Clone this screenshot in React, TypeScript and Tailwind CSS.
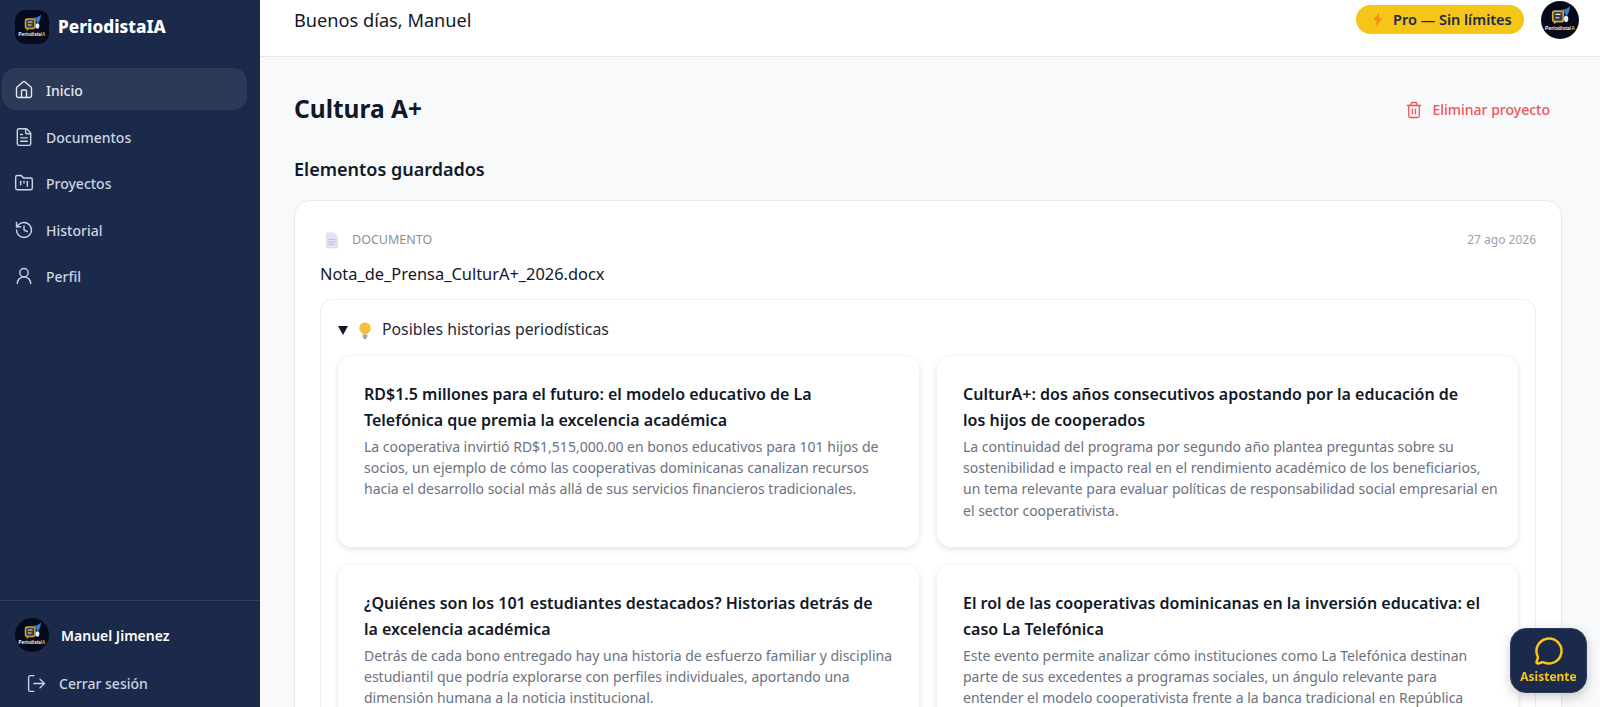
import { FileText, FolderKanban, History, House, LogOut, MessageCircle, Trash2, UserRound } from 'lucide-react';

const navItems = [
  { label: 'Inicio', icon: House, active: true },
  { label: 'Documentos', icon: FileText, active: false },
  { label: 'Proyectos', icon: FolderKanban, active: false },
  { label: 'Historial', icon: History, active: false },
  { label: 'Perfil', icon: UserRound, active: false },
];

// line breaks are kept as in the screenshot
const stories = [
  {
    title: 'RD$1.5 millones para el futuro: el modelo educativo de La\nTelefónica que premia la excelencia académica',
    body: 'La cooperativa invirtió RD$1,515,000.00 en bonos educativos para 101 hijos de\nsocios, un ejemplo de cómo las cooperativas dominicanas canalizan recursos\nhacia el desarrollo social más allá de sus servicios financieros tradicionales.',
  },
  {
    title: 'CulturA+: dos años consecutivos apostando por la educación de\nlos hijos de cooperados',
    body: 'La continuidad del programa por segundo año plantea preguntas sobre su\nsostenibilidad e impacto real en el rendimiento académico de los beneficiarios,\nun tema relevante para evaluar políticas de responsabilidad social empresarial en\nel sector cooperativista.',
  },
  {
    title: '¿Quiénes son los 101 estudiantes destacados? Historias detrás de\nla excelencia académica',
    body: 'Detrás de cada bono entregado hay una historia de esfuerzo familiar y disciplina\nestudiantil que podría explorarse con perfiles individuales, aportando una\ndimensión humana a la noticia institucional.',
  },
  {
    title: 'El rol de las cooperativas dominicanas en la inversión educativa: el\ncaso La Telefónica',
    body: 'Este evento permite analizar cómo instituciones como La Telefónica destinan\nparte de sus excedentes a programas sociales, un ángulo relevante para\nentender el modelo cooperativista frente a la banca tradicional en República',
  },
];

function Logo({ className }: { className: string }): React.ReactElement {
  return (
    <div className={`shrink-0 overflow-hidden bg-[#050b1c] ${className}`}>
      <svg viewBox="0 0 34 34" className="h-full w-full" aria-hidden="true">
        <path d="M18 7.500c3.500.5 6-.5 8-3-.2 3.500-1.500 7.500-3.500 9.500-.5-3-2-5.500-4.500-6.500z" fill="#2f80d8" />
        <rect x="10.500" y="9" width="9.500" height="9.500" rx="2" fill="#33404f" stroke="#d9a92c" strokeWidth="1.500" />
        <path d="M13 12h4.500M13 15h3.500" stroke="#f0e6c0" strokeWidth="1" />
        <path d="M12 18.500l-.5 2.500 3-2.500z" fill="#d9a92c" />
        <ellipse cx="22.500" cy="16" rx="1.900" ry="2.800" fill="#e8edf5" />
        <text x="17" y="25.500" textAnchor="middle" fontSize="4.600" fontWeight="700" fill="#f1f5f9" fontFamily="'Liberation Sans', sans-serif">
          Periodista<tspan fill="#e0b23a">IA</tspan>
        </text>
      </svg>
    </div>
  );
}

function Sidebar(): React.ReactElement {
  return (
    <aside className="flex h-full w-[260px] shrink-0 flex-col bg-[#1b2a4a]">
      <div className="flex h-[54px] items-center gap-[9px] pl-[15px]">
        <Logo className="h-[34px] w-[34px] rounded-[10px]" />
        <span className="text-[17.200px] font-extrabold text-white">PeriodistaIA</span>
      </div>

      <nav className="mt-[14px] flex flex-col gap-[5px] pl-[2px] pr-[13px]">
        {navItems.map((item) => (
          <a
            key={item.label}
            href="#"
            className={`flex h-[41.500px] items-center gap-[12.500px] rounded-[14px] pl-[11.500px] pt-[3px] text-[14px] font-medium ${
              item.active ? 'bg-white/8 text-[#e2e8f0]' : 'text-[#cbd5e1]'
            }`}
          >
            <item.icon className="h-[20px] w-[20px]" strokeWidth={1.700} />
            <span className="relative top-[0.500px]">{item.label}</span>
          </a>
        ))}
      </nav>

      <div className="mt-auto border-t border-white/10 pb-[11px] pl-[15px] pt-[17px]">
        <div className="flex items-center gap-[12px]">
          <Logo className="h-[34px] w-[34px] rounded-full" />
          <span className="text-[14px] font-semibold text-white">Manuel Jimenez</span>
        </div>
        <a href="#" className="ml-[11px] mt-[18px] flex h-[26px] items-center gap-[12px] text-[14px] font-medium text-[#cbd5e1]">
          <LogOut className="h-[21px] w-[21px]" strokeWidth={1.600} />
          Cerrar sesión
        </a>
      </div>
    </aside>
  );
}

function Header(): React.ReactElement {
  return (
    <header className="flex h-[57px] shrink-0 items-start justify-between border-b border-[#e5e7eb] bg-white pl-[34px] pr-[21px]">
      <h2 className="mt-[7px] text-[18.200px] text-[#111827]">Buenos días, Manuel</h2>
      <div className="mt-[1px] flex items-start gap-[17px]">
        <div className="mt-[4px] flex h-[29px] w-[168px] items-center gap-[10px] rounded-full bg-[#f5c518] pl-[17px] text-[14.500px] font-semibold text-[#1b2a4a]">
          <svg viewBox="0 0 12 16" className="h-[15px] w-[10px]" aria-hidden="true">
            <path d="M7.500 0L0.500 9h4L3.500 16 11.500 6.500h-4.500z" fill="#f97316" fillOpacity="0.700" />
          </svg>
          Pro — Sin límites
        </div>
        <Logo className="h-[38px] w-[38px] rounded-full" />
      </div>
    </header>
  );
}

function Bulb(): React.ReactElement {
  return (
    <svg viewBox="0 0 14 18" className="h-[17px] w-[14px]" aria-hidden="true">
      <path d="M7 0.500a6 6 0 0 0-3.500 10.900c.6.5.9 1.100.9 1.800h5.200c0-.7.3-1.300.9-1.800A6 6 0 0 0 7 .5z" fill="#fbbf3c" />
      <rect x="4.500" y="13.500" width="5" height="3" rx="0.800" fill="#9ca3af" />
      <rect x="5.500" y="16.500" width="3" height="1.200" rx="0.500" fill="#6b7280" />
    </svg>
  );
}

function DocGlyph(): React.ReactElement {
  return (
    <svg viewBox="0 0 14 17" className="h-[17px] w-[14px]" aria-hidden="true">
      <path d="M1 1.500A1 1 0 0 1 2 .5h7l4 4v11a1 1 0 0 1-1 1H2a1 1 0 0 1-1-1z" fill="#e4e0f2" />
      <path d="M3.500 7.500h7M3.500 10h7M3.500 12.500h5" stroke="#b9b6c9" strokeWidth="0.800" />
    </svg>
  );
}

function StoryCard({ title, body }: { title: string; body: string }): React.ReactElement {
  return (
    <article className="h-[191px] rounded-[14px] bg-white pl-[26px] pt-[26px] shadow-[0_2px_6px_rgba(0,0,0,0.12)]">
      <h3 className="whitespace-pre text-[16px] font-semibold leading-[25.500px] text-[#111827]">{title}</h3>
      <p className="mt-[3px] whitespace-pre text-[14px] leading-[21.200px] text-[#6b7280]">{body}</p>
    </article>
  );
}

export default function App(): React.ReactElement {
  return (
    <div className="flex h-screen overflow-hidden bg-[#f8f9fb] font-['Noto_Sans',sans-serif]">
      <Sidebar />

      <div className="flex min-w-0 flex-1 flex-col">
        <Header />

        <main className="min-h-0 flex-1 overflow-hidden pl-[34px] pr-[38px] pt-[34px]">
          <div className="flex h-[36px] items-center justify-between">
            <h1 className="text-[24.500px] font-bold text-[#111827]">Cultura A+</h1>
            <button type="button" className="mr-[12px] mt-[1px] flex items-center gap-[9px] text-[14px] font-medium text-[#f0525a]">
              <Trash2 className="h-[18px] w-[18px]" strokeWidth={1.700} />
              Eliminar proyecto
            </button>
          </div>

          <h2 className="mt-[30px] text-[18px] font-semibold leading-[25px] text-[#111827]">Elementos guardados</h2>

          <section className="mt-[18px] rounded-[16px] border border-[#e8eaee] bg-white px-[25px] pt-[30px] shadow-[0_1px_3px_rgba(0,0,0,0.04)]">
            <div className="flex h-[18px] items-center justify-between">
              <div className="flex items-center gap-[13px] pl-[5px] text-[12.500px] text-[#8b8f99]">
                <DocGlyph />
                DOCUMENTO
              </div>
              <span className="text-[12px] text-[#9ca3af]">27 ago 2026</span>
            </div>

            <p className="mt-[14px] text-[16.400px] leading-[22px] text-[#111827]">Nota_de_Prensa_CulturA+_2026.docx</p>

            <div className="mt-[14px] rounded-[12px] border border-[#eceef1] px-[17px] pt-[18px]">
              <div className="flex h-[24px] items-center text-[15.800px] text-[#1f2937]">
                <svg viewBox="0 0 10 9" className="h-[9px] w-[10px]" aria-hidden="true">
                  <path d="M0 0h10L5 9z" fill="#111827" />
                </svg>
                <span className="ml-[10px] mr-[10px] flex"><Bulb /></span>
                Posibles historias periodísticas
              </div>
              <div className="mt-[14px] grid grid-cols-2 gap-x-[18px] gap-y-[18px]">
                {stories.map((story) => (
                  <StoryCard key={story.title} title={story.title} body={story.body} />
                ))}
              </div>
            </div>
          </section>
        </main>
      </div>

      <button
        type="button"
        className="fixed bottom-[14px] right-[13px] flex h-[65px] w-[77px] flex-col items-center justify-center gap-[2px] rounded-[16px] border border-[#2f3d5c] bg-[#1b2a4a] text-[12px] font-bold text-[#f5c518] shadow-[0_4px_12px_rgba(0,0,0,0.2)]"
      >
        <MessageCircle className="h-[30px] w-[30px]" strokeWidth={2} />
        Asistente
      </button>
    </div>
  );
}
